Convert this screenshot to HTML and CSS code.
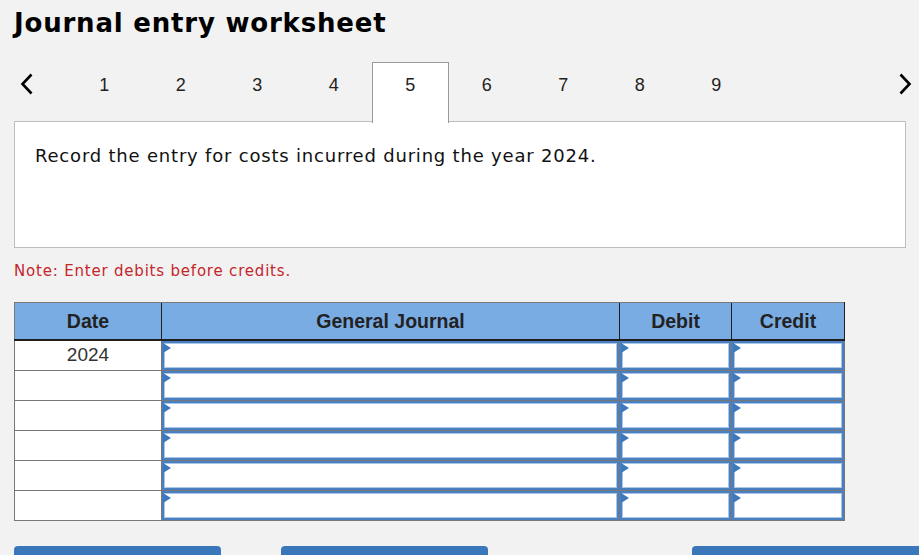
FILE: index.html
```html
<!DOCTYPE html>
<html>
<head>
<meta charset="utf-8">
<link rel="stylesheet" href="styles.css">
</head>
<body>
<div class="page">
  <h1 class="title">Journal entry worksheet</h1>
  <div class="tabs">
    <div class="arrow arrow-left">
      <svg width="14" height="22" viewBox="0 0 14 22"><path d="M11.5 1.5 L2.5 11 L11.5 20.5" fill="none" stroke="#000" stroke-width="2.6"/></svg>
    </div>
    <div class="tab">1</div>
    <div class="tab">2</div>
    <div class="tab">3</div>
    <div class="tab">4</div>
    <div class="tab active">5</div>
    <div class="tab">6</div>
    <div class="tab">7</div>
    <div class="tab">8</div>
    <div class="tab">9</div>
    <div class="spacer"></div>
    <div class="arrow arrow-right">
      <svg width="14" height="22" viewBox="0 0 14 22"><path d="M2.5 1.5 L11.5 11 L2.5 20.5" fill="none" stroke="#000" stroke-width="2.6"/></svg>
    </div>
  </div>
  <div class="panel">
    <p class="prompt">Record the entry for costs incurred during the year 2024.</p>
  </div>
  <p class="note">Note: Enter debits before credits.</p>
  <table class="journal">
    <thead>
      <tr>
        <th class="c-date">Date</th>
        <th class="c-gj">General Journal</th>
        <th class="c-amt">Debit</th>
        <th class="c-amt2">Credit</th>
      </tr>
    </thead>
    <tbody>
      <tr><td class="date">2024</td><td class="inp"><span class="flag"></span><span class="field"></span></td><td class="inp"><span class="flag"></span><span class="field"></span></td><td class="inp"><span class="flag"></span><span class="field"></span></td></tr>
      <tr><td class="date"></td><td class="inp"><span class="flag"></span><span class="field"></span></td><td class="inp"><span class="flag"></span><span class="field"></span></td><td class="inp"><span class="flag"></span><span class="field"></span></td></tr>
      <tr><td class="date"></td><td class="inp"><span class="flag"></span><span class="field"></span></td><td class="inp"><span class="flag"></span><span class="field"></span></td><td class="inp"><span class="flag"></span><span class="field"></span></td></tr>
      <tr><td class="date"></td><td class="inp"><span class="flag"></span><span class="field"></span></td><td class="inp"><span class="flag"></span><span class="field"></span></td><td class="inp"><span class="flag"></span><span class="field"></span></td></tr>
      <tr><td class="date"></td><td class="inp"><span class="flag"></span><span class="field"></span></td><td class="inp"><span class="flag"></span><span class="field"></span></td><td class="inp"><span class="flag"></span><span class="field"></span></td></tr>
      <tr><td class="date"></td><td class="inp"><span class="flag"></span><span class="field"></span></td><td class="inp"><span class="flag"></span><span class="field"></span></td><td class="inp"><span class="flag"></span><span class="field"></span></td></tr>
    </tbody>
  </table>
  <div class="buttons">
    <div class="btn"></div>
    <div class="btn"></div>
    <div class="grow"></div>
    <div class="btn btn-wide"></div>
  </div>
</div>
</body>
</html>
```

FILE: styles.css
```css
html, body {
  margin: 0;
  padding: 0;
  background: #f2f2f2;
  overflow: hidden;
}
.page {
  padding: 0 0 0 14px;
  width: 940px;
  font-family: "DejaVu Sans", Verdana, sans-serif;
  color: #000;
}
.title {
  margin: 0;
  padding-top: 8px;
  font-size: 26px;
  line-height: 30px;
  font-weight: bold;
  letter-spacing: 0.8px;
}
.tabs {
  display: flex;
  margin-top: 24px;
  height: 60px;
  width: 892px;
  position: relative;
  z-index: 2;
}
.arrow {
  display: flex;
  align-items: flex-start;
  padding-top: 11px;
}
.arrow-left {
  width: 52px;
  padding-left: 6px;
  box-sizing: border-box;
}
.arrow-right {
  width: 30px;
  margin-right: -22px;
}
.spacer { flex: 1; }
.tab {
  width: 76.5px;
  box-sizing: border-box;
  height: 61px;
  padding-top: 13px;
  line-height: 20px;
  text-align: center;
  font-family: "Liberation Sans", Arial, sans-serif;
  font-size: 18px;
  color: #222;
}
.tab.active {
  background: #fff;
  border: 1px solid #9a9a9a;
  border-bottom: none;
  padding-top: 12px;
}
.panel {
  width: 892px;
  height: 127px;
  box-sizing: border-box;
  background: #fff;
  border: 1px solid #bdbdbd;
  position: relative;
  z-index: 1;
  margin-top: -1px;
}
.prompt {
  margin: 0;
  padding: 23px 0 0 20px;
  font-size: 18px;
  line-height: 22px;
  letter-spacing: 0.8px;
  color: #111;
}
.note {
  margin: 13px 0 0;
  font-size: 15px;
  line-height: 20px;
  letter-spacing: 0.8px;
  color: #c4262c;
}
.journal {
  margin-top: 21px;
  border-collapse: collapse;
  width: 829px;
  table-layout: fixed;
  border: 1px solid #777;
  font-family: "Liberation Sans", Arial, sans-serif;
}
.journal th {
  background: #7aace4;
  height: 36px;
  padding: 0;
  font-size: 19.5px;
  font-weight: bold;
  color: #222;
  border-left: 1px solid #1f1f1f;
  border-bottom: 2px solid #1f1f1f;
  border-top: 1px solid #777;
}
.journal th:first-child { border-left: 1px solid #777; }
.journal th:last-child { border-right: 1px solid #1f1f1f; }
.c-date { width: 146px; }
.c-gj { width: 457px; }
.c-amt { width: 111px; }
.c-amt2 { width: 112px; }
.journal td {
  height: 29px;
  padding: 0;
  border: 1px solid #777;
}
.journal td.date {
  background: #fff;
  text-align: center;
  vertical-align: top;
  font-size: 19px;
  line-height: 28px;
  color: #333;
}
.journal td.inp {
  position: relative;
  background: #fff;
}
.field {
  display: block;
  height: 29px;
  box-sizing: border-box;
  border: 2px solid #4a7fc0;
  box-shadow: inset 0 0 0 1px #a9c6ea;
  background: #fff;
}
.flag {
  position: absolute;
  left: 1px;
  top: 2px;
  width: 0;
  height: 0;
  border-top: 5px solid transparent;
  border-bottom: 5px solid transparent;
  border-left: 8px solid #3c78be;
}
.buttons {
  display: flex;
  margin-top: 25px;
  width: 940px;
}
.btn {
  width: 207px;
  height: 40px;
  background: #3a77ba;
  border-radius: 4px 4px 0 0;
  box-sizing: border-box;
}
.btn + .btn { margin-left: 60px; }
.grow { flex: 1; }
.btn-wide { width: 262px; }
```
